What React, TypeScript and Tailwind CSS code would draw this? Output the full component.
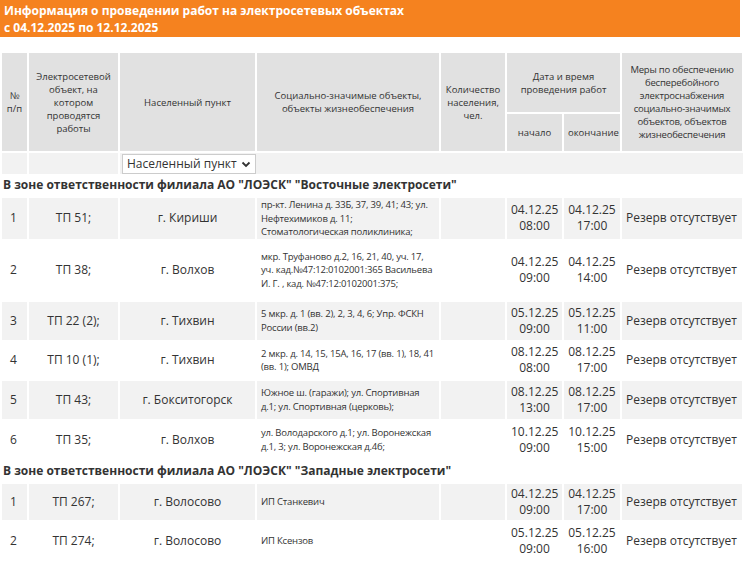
const rows1 = [
  { n: "1", obj: "ТП 51;", city: "г. Кириши", soc: "пр-кт. Ленина д. 33Б, 37, 39, 41; 43; ул. Нефтехимиков д. 11; Стоматологическая поликлиника;", s: ["04.12.25", "08:00"], e: ["04.12.25", "17:00"], h: "h-[41px]" },
  { n: "2", obj: "ТП 38;", city: "г. Волхов", soc: "мкр. Труфаново д.2, 16, 21, 40, уч. 17, уч. кад.№47:12:0102001:365 Васильева И. Г. , кад. №47:12:0102001:375;", s: ["04.12.25", "09:00"], e: ["04.12.25", "14:00"], h: "h-[61px]" },
  { n: "3", obj: "ТП 22 (2);", city: "г. Тихвин", soc: "5 мкр. д. 1 (вв. 2), 2, 3, 4, 6; Упр. ФСКН России (вв.2)", s: ["05.12.25", "09:00"], e: ["05.12.25", "11:00"], h: "h-[40px]" },
  { n: "4", obj: "ТП 10 (1);", city: "г. Тихвин", soc: "2 мкр. д. 14, 15, 15А, 16, 17 (вв. 1), 18, 41 (вв. 1); ОМВД", s: ["08.12.25", "08:00"], e: ["08.12.25", "17:00"], h: "h-[39px]" },
  { n: "5", obj: "ТП 43;", city: "г. Бокситогорск", soc: "Южное ш. (гаражи); ул. Спортивная д.1; ул. Спортивная (церковь);", s: ["08.12.25", "13:00"], e: ["08.12.25", "17:00"], h: "h-[40px]" },
  { n: "6", obj: "ТП 35;", city: "г. Волхов", soc: "ул. Володарского д.1; ул. Воронежская д.1, 3; ул. Воронежская д.4б;", s: ["10.12.25", "09:00"], e: ["10.12.25", "15:00"], h: "h-[40px]" },
];
const rows2 = [
  { n: "1", obj: "ТП 267;", city: "г. Волосово", soc: "ИП Станкевич", s: ["04.12.25", "09:00"], e: ["04.12.25", "17:00"], h: "h-[38px]" },
  { n: "2", obj: "ТП 274;", city: "г. Волосово", soc: "ИП Ксензов", s: ["05.12.25", "09:00"], e: ["05.12.25", "16:00"], h: "h-[40px]" },
];

type Row = (typeof rows1)[number];

const td = "border-2 border-white px-1 align-middle";

function DataRow({ r, i }: { r: Row; i: number }) {
  return (
    <tr className={`${r.h} ${i % 2 === 0 ? "bg-[#f2f2f2]" : "bg-white"}`}>
      <td className={`${td} text-[12px] pl-2`}>{r.n}</td>
      <td className={`${td} text-[12px] text-center`}>{r.obj}</td>
      <td className={`${td} text-[12px] text-center`}>{r.city}</td>
      <td className={`${td} text-[9.5px] leading-[13.5px] tracking-[-0.2px]`}>{r.soc}</td>
      <td className={td}></td>
      <td className={`${td} text-[12px] leading-[16px] text-center px-0`}>{r.s[0]}<br />{r.s[1]}</td>
      <td className={`${td} text-[12px] leading-[16px] text-center px-0`}>{r.e[0]}<br />{r.e[1]}</td>
      <td className={`${td} text-[12px] whitespace-nowrap px-0.5`}>Резерв отсутствует</td>
    </tr>
  );
}

function Section({ title }: { title: string }) {
  return (
    <tr className="h-[23px]">
      <td colSpan={8} className="text-[12px] font-bold pl-0.5 whitespace-nowrap">{title}</td>
    </tr>
  );
}

export default function App() {
  const th = "border-2 border-white bg-[#e1e1e1] font-normal text-[9.5px] leading-[13px] text-center align-middle px-1";
  return (
    <div className="w-[743px] h-[563px] overflow-hidden bg-white text-[#333]" style={{ fontFamily: '"Open Sans", sans-serif' }}>
      <div className="w-[740px] bg-[#f5821f] text-white font-bold text-[12px] leading-[17px] px-1 pt-[2px] pb-[1px]">
        Информация о проведении работ на электросетевых объектах<br />с 04.12.2025 по 12.12.2025
      </div>
      <table className="mt-[14px] w-[742px] table-fixed border-collapse">
        <colgroup>
          <col className="w-[27px]" />
          <col className="w-[91px]" />
          <col className="w-[137px]" />
          <col className="w-[184px]" />
          <col className="w-[66px]" />
          <col className="w-[57px]" />
          <col className="w-[58px]" />
          <col className="w-[122px]" />
        </colgroup>
        <thead>
          <tr className="h-[61px]">
            <th rowSpan={2} className={`${th} px-0`}>№<br />п/п</th>
            <th rowSpan={2} className={th}>Электросетевой объект, на котором проводятся работы</th>
            <th rowSpan={2} className={th}>Населенный пункт</th>
            <th rowSpan={2} className={th}>Социально-значимые объекты, объекты жизнеобеспечения</th>
            <th rowSpan={2} className={`${th} px-0`}>Количество населения, чел.</th>
            <th colSpan={2} className={th}>Дата и время<br />проведения работ</th>
            <th rowSpan={2} className={`${th} px-0 tracking-[-0.2px]`}>Меры по обеспечению бесперебойного электроснабжения социально-значимых объектов, объектов жизнеобеспечения</th>
          </tr>
          <tr className="h-[39px]">
            <th className={th}>начало</th>
            <th className={`${th} px-0`}>окончание</th>
          </tr>
        </thead>
        <tbody>
          <tr className="h-[22px] bg-[#f2f2f2]">
            <td className="border-x-2 border-white"></td>
            <td className="border-x-2 border-white"></td>
            <td className="px-0.5">
              <div className="flex items-center justify-between h-[20px] w-[134px] bg-white border border-[#ccc] text-[12px] px-1 whitespace-nowrap">
                Населенный пункт
                <svg width="10" height="10" viewBox="0 0 10 10" className="shrink-0"><path d="M1.5 3.5 5 7l3.5-3.5" fill="none" stroke="#333" strokeWidth="1.8" /></svg>
              </div>
            </td>
            <td colSpan={5}></td>
          </tr>
          <Section title={'В зоне ответственности филиала АО "ЛОЭСК" "Восточные электросети"'} />
          {rows1.map((r, i) => <DataRow key={"a" + i} r={r} i={i} />)}
          <Section title={'В зоне ответственности филиала АО "ЛОЭСК" "Западные электросети"'} />
          {rows2.map((r, i) => <DataRow key={"b" + i} r={r} i={i} />)}
        </tbody>
      </table>
    </div>
  );
}
